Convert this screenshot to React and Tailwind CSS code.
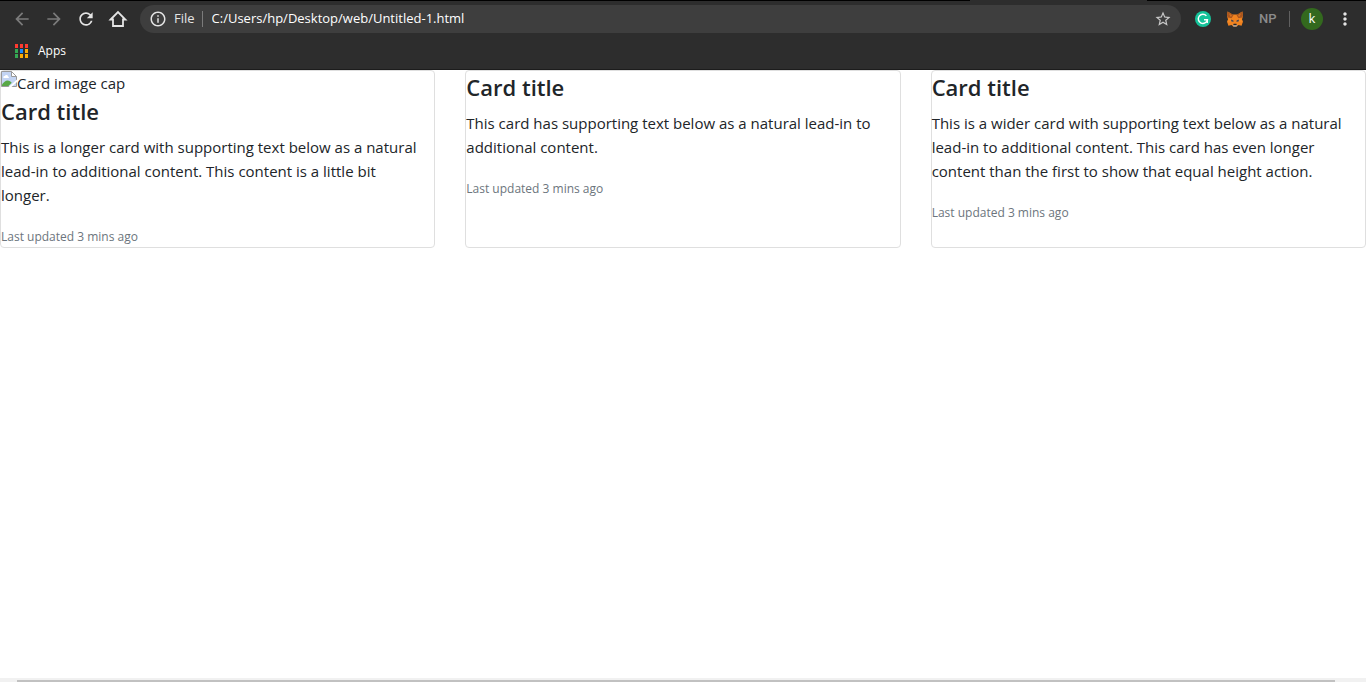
import {
  MdArrowBack,
  MdArrowForward,
  MdInfoOutline,
  MdMoreVert,
  MdRefresh,
  MdStarBorder,
} from "react-icons/md";

const cards = [
  {
    image: true,
    title: "Card title",
    text: "This is a longer card with supporting text below as a natural lead-in to additional content. This content is a little bit longer.",
    updated: "Last updated 3 mins ago",
  },
  {
    title: "Card title",
    text: "This card has supporting text below as a natural lead-in to additional content.",
    updated: "Last updated 3 mins ago",
  },
  {
    title: "Card title",
    text: "This is a wider card with supporting text below as a natural lead-in to additional content. This card has even longer content than the first to show that equal height action.",
    updated: "Last updated 3 mins ago",
  },
];

const appDots = [
  "#ff3b30", "#ff3b30", "#ff3b30",
  "#34a853", "#1a8cff", "#fbab05",
  "#34a853", "#fbab05", "#fbab05",
];

function AppsIcon() {
  return (
    <svg width="14" height="14" viewBox="0 0 14 14" aria-hidden="true">
      {appDots.map((color, i) => (
        <rect
          key={i}
          x={(i % 3) * 5}
          y={Math.floor(i / 3) * 5}
          width="3"
          height="4"
          fill={color}
        />
      ))}
    </svg>
  );
}

function HomeIcon() {
  return (
    <svg width="20" height="20" viewBox="0 0 20 20" aria-hidden="true">
      <path
        d="M2.600 10.500L10 3l7.400 7.500H15V17H5v-6.500z"
        fill="none"
        stroke="currentColor"
        strokeWidth="1.8"
      />
    </svg>
  );
}

function GrammarlyIcon() {
  return (
    <svg width="16" height="16" viewBox="0 0 16 16" aria-hidden="true">
      <circle cx="8" cy="8" r="8" fill="#15c39a" />
      <path
        d="M11.400 4.900A4.600 4.600 0 1 0 12.400 8.800H9M12.300 8.800V12"
        fill="none"
        stroke="#fff"
        strokeWidth="1.4"
      />
    </svg>
  );
}

function FoxIcon() {
  return (
    <svg width="16" height="16" viewBox="0 0 16 16" aria-hidden="true">
      <path d="M.6.5L5.500 3.500h5L15.400.5 16 5l-1 3.600.8 2.400-1.200 3.800-3.200-.8-1.600 1.600H6.200L4.600 14l-3.200.8L.2 11 1 8.600 0 5z" fill="#f0821f" />
      <path d="M.6.5L6.500 4 4.600 7.200 1 6.600 0 5zM15.400.5L9.500 4l1.900 3.200 3.600-.6 1-1.600z" fill="#a9561f" />
      <path d="M1.800 2.200L5 4.400 3.800 6zM14.200 2.200L11 4.400 12.200 6z" fill="#d9731e" />
      <path d="M1 8.600l3.600-1 .6 3.400-5 .2zM15 8.600l-3.600-1-.6 3.400 5 .2z" fill="#f58a25" />
      <path d="M4 8.600l2.400 1 .2 1.200-2.200-.4zM12 8.600l-2.400 1-.2 1.200 2.200-.4z" fill="#33425a" />
      <path d="M5.600 12.400L6.400 15.600h3.200l.8-3.200L9.600 14H6.400z" fill="#c9c0b8" />
      <path d="M6.600 12.800h2.800l.4 1.400H6.200z" fill="#252525" />
    </svg>
  );
}

function BrokenImageIcon() {
  return (
    <svg width="16" height="16" viewBox="0 0 16 16" aria-hidden="true">
      <path d="M.5.5h10l5 5v10H.5z" fill="#c3d4f3" />
      <path d="M2.500 7c-.8-1.400.6-2.400 1.300-2 .6-1.600 3-1.400 3.200.4 1.200 0 1.200 1.600.4 1.600z" fill="#fff" />
      <path d="M1 15v-1.500C2.500 11.500 4.500 9.500 6.500 9.500c2 0 3.300 1 4.200 2.300L7.500 15z" fill="#58a846" />
      <path d="M.5.5h10l5 5v10H.5z" fill="none" stroke="#9a9a9a" />
      <path d="M10.500.5v5h5z" fill="#fff" stroke="#9a9a9a" />
      <path d="M7.500 16L16 8.500v2.500L10.500 16z" fill="#fff" />
    </svg>
  );
}

function Toolbar() {
  return (
    <header className="border-b border-[#1c1c1c] bg-[#2d2d2d] text-white">
      {/* bottom edge of the tab strip */}
      <div className="flex h-px bg-black">
        <div className="ml-[71%] w-[13%] bg-[#2d2d2d]" />
      </div>

      <div className="flex h-9 items-center pr-[11px] pl-3">
        <nav className="flex items-center gap-3">
          <button aria-label="Back" className="text-[#7b7b7b]">
            <MdArrowBack size={20} />
          </button>
          <button aria-label="Forward" className="text-[#7b7b7b]">
            <MdArrowForward size={20} />
          </button>
          <button aria-label="Reload" className="text-[#e4e4e4]">
            <MdRefresh size={20} />
          </button>
          <button aria-label="Home" className="text-[#e4e4e4]">
            <HomeIcon />
          </button>
        </nav>

        <div className="ml-3 flex h-7 flex-1 items-center rounded-full bg-[#3e3e3e] px-[9px] text-[13px]">
          <MdInfoOutline size={18} className="text-[#e4e4e4]" />
          <label htmlFor="address" className="ml-[7px] text-[#e4e4e4]">File</label>
          <span className="mr-[9px] ml-[7px] h-4 w-px bg-[#7b7b7b]" />
          <input
            id="address"
            type="text"
            defaultValue="C:/Users/hp/Desktop/web/Untitled-1.html"
            className="min-w-0 flex-1 bg-transparent outline-none"
          />
          <button aria-label="Bookmark this page" className="text-[#c8c8c8]">
            <MdStarBorder size={18} />
          </button>
        </div>

        <div className="ml-3.5 flex items-center gap-4">
          <button aria-label="Grammarly">
            <GrammarlyIcon />
          </button>
          <button aria-label="MetaMask">
            <FoxIcon />
          </button>
          <button className="w-4 font-[Roboto,sans-serif] text-[13px] font-medium text-[#8b8b8b]">
            NP
          </button>
        </div>
        <span className="ml-3.5 h-4 w-px bg-[#606060]" />
        <button className="ml-[11px] flex size-[22px] items-center justify-center rounded-full bg-[#33691e] text-[13px]">
          k
        </button>
        <button aria-label="Menu" className="ml-3 text-[#e4e4e4]">
          <MdMoreVert size={20} />
        </button>
      </div>

      <div className="flex h-8 items-center px-[15px] pb-1">
        <button className="flex items-center gap-[9px] text-xs">
          <AppsIcon />
          Apps
        </button>
      </div>
    </header>
  );
}

function Card({ card }) {
  return (
    <article className="rounded border border-[#dfdfdf]">
      {card.image && (
        <div role="img" aria-label="Card image cap" className="flex h-6">
          <BrokenImageIcon />
          <span className="leading-6">Card image cap</span>
        </div>
      )}
      <h5 className="mb-2 text-[22px] leading-8 font-semibold">{card.title}</h5>
      <p className="mb-4 pr-2 leading-6">{card.text}</p>
      <p className="leading-6">
        <small className="text-xs text-[#6c757d]">{card.updated}</small>
      </p>
    </article>
  );
}

export default function App() {
  return (
    <div className="flex min-h-screen flex-col bg-white font-['Open_Sans','Noto_Sans',sans-serif]">
      <Toolbar />
      <main className="grid grid-cols-3 gap-[30px] text-[15px] text-[#212529]">
        {cards.map((card, i) => (
          <Card key={i} card={card} />
        ))}
      </main>

      {/* horizontal scrollbar */}
      <div className="mt-auto bg-[#f1f1f1] pt-0.5 pr-[31px] pl-[17px]">
        <div className="h-0.5 bg-[#c1c1c1]" />
      </div>
    </div>
  );
}
